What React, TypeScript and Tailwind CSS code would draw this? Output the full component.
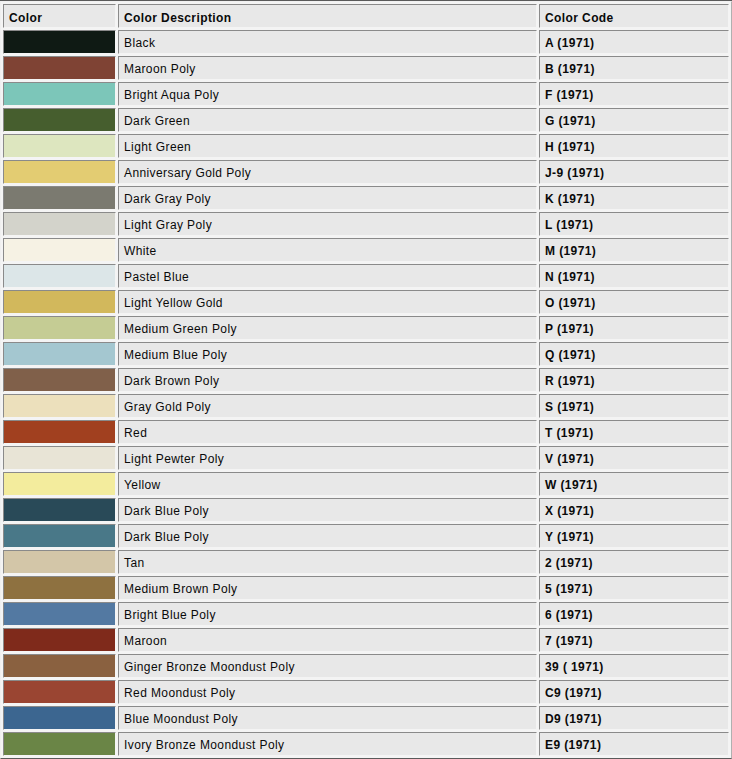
/**
 * 1971 paint colour chart, old-style bordered HTML table.
 */

interface PaintColor {
	swatch: string;
	name: string;
	code: string;
}

const colors: PaintColor[] = [
	{ swatch: "#0f1a14", name: "Black", code: "A (1971)" },
	{ swatch: "#7f4334", name: "Maroon Poly", code: "B (1971)" },
	{ swatch: "#7cc6b9", name: "Bright Aqua Poly", code: "F (1971)" },
	{ swatch: "#465e2e", name: "Dark Green", code: "G (1971)" },
	{ swatch: "#dde6bf", name: "Light Green", code: "H (1971)" },
	{ swatch: "#e3cc72", name: "Anniversary Gold Poly", code: "J-9 (1971)" },
	{ swatch: "#7b7a70", name: "Dark Gray Poly", code: "K (1971)" },
	{ swatch: "#d3d3cb", name: "Light Gray Poly", code: "L (1971)" },
	{ swatch: "#f6f2e4", name: "White", code: "M (1971)" },
	{ swatch: "#dce6e8", name: "Pastel Blue", code: "N (1971)" },
	{ swatch: "#d2b85c", name: "Light Yellow Gold", code: "O (1971)" },
	{ swatch: "#c5cc94", name: "Medium Green Poly", code: "P (1971)" },
	{ swatch: "#a4c7d0", name: "Medium Blue Poly", code: "Q (1971)" },
	{ swatch: "#80604a", name: "Dark Brown Poly", code: "R (1971)" },
	{ swatch: "#ece0bc", name: "Gray Gold Poly", code: "S (1971)" },
	{ swatch: "#a1401f", name: "Red", code: "T (1971)" },
	{ swatch: "#e8e4d6", name: "Light Pewter Poly", code: "V (1971)" },
	{ swatch: "#f3ec9d", name: "Yellow", code: "W (1971)" },
	{ swatch: "#294a58", name: "Dark Blue Poly", code: "X (1971)" },
	{ swatch: "#497888", name: "Dark Blue Poly", code: "Y (1971)" },
	{ swatch: "#d3c6a8", name: "Tan", code: "2 (1971)" },
	{ swatch: "#8e7140", name: "Medium Brown Poly", code: "5 (1971)" },
	{ swatch: "#5379a2", name: "Bright Blue Poly", code: "6 (1971)" },
	{ swatch: "#7f2a1b", name: "Maroon", code: "7 (1971)" },
	{ swatch: "#8a6140", name: "Ginger Bronze Moondust Poly", code: "39 ( 1971)" },
	{ swatch: "#9a4532", name: "Red Moondust Poly", code: "C9 (1971)" },
	{ swatch: "#3c6690", name: "Blue Moondust Poly", code: "D9 (1971)" },
	{ swatch: "#6a8546", name: "Ivory Bronze Moondust Poly", code: "E9 (1971)" },
];

// inset cell border like a border=1 table
const cell =
	"h-[24px] border border-t-[#8a8a8a] border-l-[#8a8a8a] border-b-[#f4f4f4] border-r-[#f4f4f4] bg-[#e8e8e8] pl-[5px] pr-[4px] pb-0 text-left align-middle";

export default function App(): React.ReactNode {
	return (
		<div className="min-h-[759px] w-[732px] border-t border-t-[#5a5a5a] bg-white font-['Liberation_Sans',Arial,sans-serif] text-[12px] leading-none tracking-[0.4px] text-[#0a0a0a]">
			<table className="w-[732px] table-fixed border-separate border-spacing-[2px] border border-t-[#f0f0f0] border-l-[#f0f0f0] border-r-[#b0b0b0] border-b-[#5a5a5a] bg-[#f4f4f4]">
				<colgroup>
					<col className="w-[113px]" />
					<col className="w-[419px]" />
					<col className="w-[190px]" />
				</colgroup>
				<thead>
					<tr>
						<th className={`${cell} pt-[4px] font-bold`}>Color</th>
						<th className={`${cell} pt-[4px] font-bold`}>Color Description</th>
						<th className={`${cell} pt-[4px] font-bold`}>Color Code</th>
					</tr>
				</thead>
				<tbody>
					{colors.map((c) => (
						<tr key={c.code}>
							<td className={`${cell} pt-[2px]`} style={{ backgroundColor: c.swatch }} />
							<td className={`${cell} pt-[2px]`}>{c.name}</td>
							<td className={`${cell} pt-[2px] font-bold`}>{c.code}</td>
						</tr>
					))}
				</tbody>
			</table>
		</div>
	);
}
